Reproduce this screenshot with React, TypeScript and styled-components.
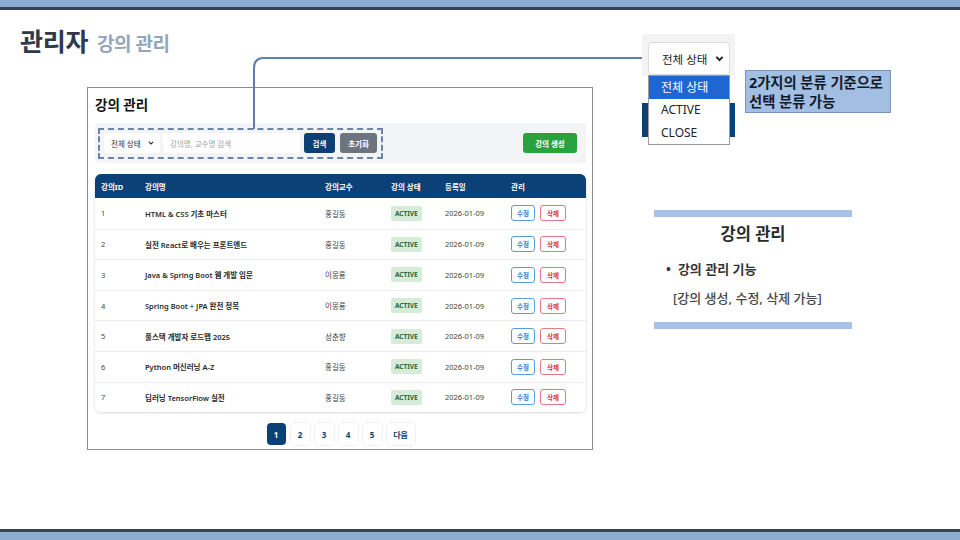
import React from 'react'
import styled, { createGlobalStyle } from 'styled-components'

const FONT = `"Noto Sans", "Noto Sans CJK KR", sans-serif`

const GlobalStyle = createGlobalStyle`
  html, body {
    margin: 0;
    padding: 0;
    background: #ffffff;
    font-family: ${FONT};
  }
  * { box-sizing: border-box; }
`

const colors = {
  navy: '#0b4177',
  band: '#8eabd0',
  bandDark: '#364356',
  accent: '#a8c3e5',
  line: '#5f7ea8',
}

const Slide = styled.div`
  position: relative;
  width: 960px;
  height: 540px;
  overflow: hidden;
  display: flex;
  flex-direction: column;
  background: #fff;
`

const Band = styled.div<{ $bottom?: boolean }>`
  height: 10px;
  flex: none;
  background: ${colors.band};
  ${(p) =>
    p.$bottom
      ? `border-top: 3px solid ${colors.bandDark}; height: 11px;`
      : `border-bottom: 3px solid ${colors.bandDark};`}
`

const Body = styled.div`
  flex: 1;
  padding: 15px 0 0 20px;
  display: flex;
  flex-direction: column;
`

const PageTitle = styled.h1`
  margin: 0;
  display: flex;
  align-items: baseline;
  gap: 9px;
  height: 32px;
  font-size: 25px;
  line-height: 32px;
  font-weight: 700;
  color: #2d3a4b;
  letter-spacing: -0.3px;
`

const PageSub = styled.span`
  font-size: 19px;
  font-weight: 700;
  color: #95a5ba;
  letter-spacing: -0.5px;
`

const Content = styled.div`
  display: flex;
  padding-left: 67px;
  margin-top: 30px;
`

/* ---------- screenshot card ---------- */

const Card = styled.div`
  width: 506px;
  height: 363px;
  border: 1px solid #8c8c8c;
  padding: 8px 6px 0 7px;
  display: flex;
  flex-direction: column;
`

const CardTitle = styled.div`
  font-size: 13.5px;
  line-height: 18px;
  font-weight: 700;
  color: #111;
`

const FilterBar = styled.div`
  position: relative;
  margin-top: 9px;
  height: 40px;
  width: 491px;
  background: #f3f4f6;
  border-radius: 3px;
  display: flex;
  align-items: center;
  padding: 0 9px;
`

const DashedFrame = styled.div`
  position: absolute;
  left: 3px;
  top: 5px;
  width: 285px;
  height: 31px;
  border: 2px dashed #6a85a8;
  pointer-events: none;
`

const SmallSelect = styled.div`
  width: 56px;
  height: 20px;
  background: #fff;
  border-radius: 3px;
  display: flex;
  align-items: center;
  justify-content: space-between;
  padding: 0 6px 0 7px;
  font-size: 7.5px;
  color: #333;
`

const SearchInput = styled.div`
  margin-left: 3px;
  width: 137px;
  height: 20px;
  background: #fff;
  border-radius: 3px;
  display: flex;
  align-items: center;
  padding: 0 7px;
  font-size: 7.5px;
  color: #a3a3a3;
`

const SolidButton = styled.div<{ $bg: string; $w: number; $gap?: number }>`
  margin-left: ${(p) => p.$gap ?? 4}px;
  width: ${(p) => p.$w}px;
  height: 20px;
  border-radius: 3px;
  background: ${(p) => p.$bg};
  color: #fff;
  font-size: 7.5px;
  font-weight: 700;
  display: flex;
  align-items: center;
  justify-content: center;
`

const Spacer = styled.div`
  flex: 1;
`

const TableWrap = styled.div`
  margin-top: 11px;
  width: 491px;
  border-radius: 6px;
  overflow: hidden;
  box-shadow: 0 1px 3px rgba(0, 0, 0, 0.16);
  background: #fff;
`

const Row = styled.div<{ $head?: boolean }>`
  display: grid;
  grid-template-columns: 44px 180px 66px 54px 66px 1fr;
  align-items: center;
  padding-left: 6px;
  height: ${(p) => (p.$head ? '24px' : '30.6px')};
  font-size: 7.5px;
  color: #444;
  background: ${(p) => (p.$head ? colors.navy : '#fff')};
  ${(p) =>
    p.$head
      ? 'color: #fff; font-weight: 700;'
      : 'border-top: 1px solid #ececec;'}
  &:nth-child(2) {
    border-top: none;
  }
`

const NameCell = styled.span`
  font-weight: 600;
  color: #2a2a2a;
`

const Badge = styled.span`
  justify-self: start;
  background: #d6ecd9;
  color: #2b6b35;
  font-size: 6.5px;
  font-weight: 700;
  padding: 3px 4px;
  border-radius: 2px;
`

const Actions = styled.div`
  display: flex;
  gap: 5px;
`

const OutlineButton = styled.span<{ $tone: string }>`
  width: ${(p) => (p.$tone === 'red' ? 26 : 24)}px;
  height: 16px;
  border-radius: 3px;
  background: #fff;
  border: 1px solid ${(p) => (p.$tone === 'red' ? '#e07a83' : '#5b9be0')};
  color: ${(p) => (p.$tone === 'red' ? '#d9343f' : '#2f7fd6')};
  font-size: 6.5px;
  font-weight: 700;
  display: flex;
  align-items: center;
  justify-content: center;
`

const Pager = styled.div`
  margin-top: 11px;
  display: flex;
  justify-content: center;
  gap: 5px;
`

const PageButton = styled.span<{ $active?: boolean; $wide?: boolean }>`
  min-width: ${(p) => (p.$wide ? 28 : 19)}px;
  height: 22px;
  border-radius: 4px;
  background: ${(p) => (p.$active ? colors.navy : '#fff')};
  color: ${(p) => (p.$active ? '#fff' : colors.navy)};
  box-shadow: ${(p) => (p.$active ? 'none' : '0 0 0 1px #eef0f3')};
  font-size: 8px;
  font-weight: 700;
  display: flex;
  align-items: center;
  justify-content: center;
`

/* ---------- right panel ---------- */

const SidePanel = styled.div`
  margin-left: 61px;
  margin-top: 123px;
  width: 198px;
  display: flex;
  flex-direction: column;
`

const AccentBar = styled.div`
  height: 7px;
  background: ${colors.accent};
`

const SideTitle = styled.div`
  margin-top: 6px;
  text-align: center;
  font-size: 16.5px;
  line-height: 22px;
  font-weight: 700;
  color: #2b2b2b;
`

const Bullet = styled.div`
  margin-top: 15px;
  padding-left: 12px;
  font-size: 13px;
  line-height: 18px;
  font-weight: 700;
  color: #333;
  display: flex;
  gap: 7px;
`

const SubNote = styled.div`
  margin-top: 11px;
  padding-left: 19px;
  font-size: 13px;
  line-height: 18px;
  font-weight: 500;
  color: #474747;
  margin-bottom: 15px;
`

/* ---------- overlays ---------- */

const Connector = styled.svg`
  position: absolute;
  left: 250px;
  top: 50px;
  pointer-events: none;
`

const DropOverlay = styled.div`
  position: absolute;
  left: 642px;
  top: 34px;
  width: 93px;
  padding: 8px 5px 0 6px;
  background: linear-gradient(#f3f3f3 0 42px, transparent 42px);
  &::before {
    content: '';
    position: absolute;
    left: 0;
    right: 0;
    top: 69px;
    height: 34px;
    background: ${colors.navy};
  }
`

const DropSelect = styled.div`
  position: relative;
  height: 33px;
  background: #fff;
  border: 1px solid #dcdcdc;
  border-radius: 4px;
  display: flex;
  align-items: center;
  justify-content: space-between;
  padding: 0 5px 0 13px;
  font-size: 11.5px;
  color: #222;
`

const OptionList = styled.div`
  position: relative;
  border: 1px solid #9a9a9a;
  background: #fff;
`

const Option = styled.div<{ $selected?: boolean }>`
  height: 22.6px;
  display: flex;
  align-items: center;
  padding-left: 12px;
  font-size: 12px;
  background: ${(p) => (p.$selected ? '#1f66d3' : '#fff')};
  color: ${(p) => (p.$selected ? '#fff' : '#222')};
`

const Callout = styled.div`
  position: absolute;
  left: 745px;
  top: 70px;
  width: 146px;
  height: 43px;
  background: #a2bee2;
  border: 1px solid #7895bf;
  padding: 2px 3px;
  font-size: 14.3px;
  line-height: 19px;
  font-weight: 700;
  color: #111a2a;
  white-space: nowrap;
`

const Chevron = ({ size = 6, weight = 1.6 }: { size?: number; weight?: number }) => (
  <svg width={size} height={size} viewBox="0 0 10 10">
    <path d="M1.5 3.2 L5 6.8 L8.5 3.2" fill="none" stroke="#222" strokeWidth={weight * 1.6} />
  </svg>
)

const lectures = [
  { id: 1, name: 'HTML & CSS 기초 마스터', prof: '홍길동' },
  { id: 2, name: '실전 React로 배우는 프론트엔드', prof: '홍길동' },
  { id: 3, name: 'Java & Spring Boot 웹 개발 입문', prof: '이몽룡' },
  { id: 4, name: 'Spring Boot + JPA 완전 정복', prof: '이몽룡' },
  { id: 5, name: '풀스택 개발자 로드맵 2025', prof: '성춘향' },
  { id: 6, name: 'Python 머신러닝 A-Z', prof: '홍길동' },
  { id: 7, name: '딥러닝 TensorFlow 실전', prof: '홍길동' },
]

const pages = ['1', '2', '3', '4', '5']

const App = () => (
  <>
    <GlobalStyle />
    <Slide>
      <Band />
      <Body>
        <PageTitle>
          관리자 <PageSub>강의 관리</PageSub>
        </PageTitle>
        <Content>
          <Card>
            <CardTitle>강의 관리</CardTitle>
            <FilterBar>
              <SmallSelect>
                전체 상태 <Chevron size={6} weight={1.1} />
              </SmallSelect>
              <SearchInput>강의명, 교수명 검색</SearchInput>
              <SolidButton $bg="#0d3f73" $w={31}>
                검색
              </SolidButton>
              <SolidButton $bg="#6c757d" $w={37} $gap={5}>
                초기화
              </SolidButton>
              <Spacer />
              <SolidButton $bg="#28a23f" $w={54}>
                강의 생성
              </SolidButton>
              <DashedFrame />
            </FilterBar>
            <TableWrap>
              <Row $head>
                <span>강의ID</span>
                <span>강의명</span>
                <span>강의교수</span>
                <span>강의 상태</span>
                <span>등록일</span>
                <span>관리</span>
              </Row>
              {lectures.map((l) => (
                <Row key={l.id}>
                  <span>{l.id}</span>
                  <NameCell>{l.name}</NameCell>
                  <span>{l.prof}</span>
                  <Badge>ACTIVE</Badge>
                  <span>2026-01-09</span>
                  <Actions>
                    <OutlineButton $tone="blue">수정</OutlineButton>
                    <OutlineButton $tone="red">삭제</OutlineButton>
                  </Actions>
                </Row>
              ))}
            </TableWrap>
            <Pager>
              {pages.map((p) => (
                <PageButton key={p} $active={p === '1'}>
                  {p}
                </PageButton>
              ))}
              <PageButton $wide>다음</PageButton>
            </Pager>
          </Card>
          <SidePanel>
            <AccentBar />
            <SideTitle>강의 관리</SideTitle>
            <Bullet>
              <span>•</span>
              <span>강의 관리 기능</span>
            </Bullet>
            <SubNote>[강의 생성, 수정, 삭제 가능]</SubNote>
            <AccentBar />
          </SidePanel>
        </Content>
      </Body>
      <Band $bottom />

      <Connector width={405} height={80} viewBox="250 50 405 80">
        <path d="M254 129 V68 Q254 58 264 58 H644" fill="none" stroke={colors.line} strokeWidth={2} />
        <polygon points="643,54 651,58 643,62" fill={colors.line} />
      </Connector>

      <DropOverlay>
        <DropSelect>
          전체 상태 <Chevron size={9} weight={1.4} />
        </DropSelect>
        <OptionList>
          <Option $selected>전체 상태</Option>
          <Option>ACTIVE</Option>
          <Option>CLOSE</Option>
        </OptionList>
      </DropOverlay>

      <Callout>
        2가지의 분류 기준으로
        <br />
        선택 분류 가능
      </Callout>
    </Slide>
  </>
)

export default App
